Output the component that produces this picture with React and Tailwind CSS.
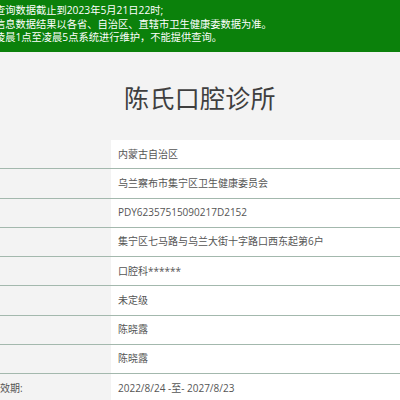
const rows = [
  { label: "", value: "内蒙古自治区" },
  { label: "", value: "乌兰察布市集宁区卫生健康委员会" },
  { label: "", value: "PDY62357515090217D2152" },
  { label: "", value: "集宁区七马路与乌兰大街十字路口西东起第6户" },
  { label: "", value: "口腔科******" },
  { label: "", value: "未定级" },
  { label: "", value: "陈晓露" },
  { label: "", value: "陈晓露" },
  { label: "有效期:", value: "2022/8/24 -至- 2027/8/23" },
];

const font = {
  fontFamily: '"Open Sans", "Noto Sans CJK SC", sans-serif',
};

export default function App() {
  return (
    <div
      className="w-[400px] h-[400px] overflow-hidden bg-[#f3f3f3]"
      style={font}
    >
      <div className="bg-[#0b810b] h-[52px] pt-[4px] text-white text-[10.25px] leading-[13.5px] whitespace-nowrap">
        <p className="-ml-[5px]">查询数据截止到2023年5月21日22时;</p>
        <p className="-ml-[5px]">信息数据结果以各省、自治区、直辖市卫生健康委数据为准。</p>
        <p className="-ml-[5px]">凌晨1点至凌晨5点系统进行维护，不能提供查询。</p>
      </div>

      <div className="h-[88px] flex items-center justify-center">
        <h1 className="text-[25px] text-[#3f3f3f] tracking-[0.3px] mt-[6px]">
          陈氏口腔诊所
        </h1>
      </div>

      <div className="flex flex-col">
        {rows.map((r, i) => (
          <div
            key={i}
            className="flex h-[29.25px] border-b-[1.5px] border-[#a3b8ad] text-[10px] text-[#555]"
          >
            <div className="w-[111px] flex items-center whitespace-nowrap overflow-hidden">
              <span className="-ml-[10px]">{r.label}</span>
            </div>
            <div className="flex-1 bg-white flex items-center pl-[7px] whitespace-nowrap">
              {r.value}
            </div>
          </div>
        ))}
      </div>
    </div>
  );
}
